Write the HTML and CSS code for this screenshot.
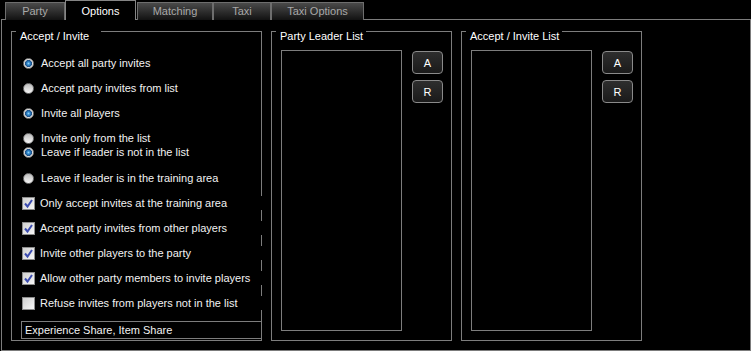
FILE: index.html
```html
<!DOCTYPE html>
<html lang="en">
<head>
  <meta charset="UTF-8">
  <title>Party Options</title>
  <link rel="stylesheet" href="styles.css">
</head>
<body>
  <div class="tabs">
    <div class="tab tab-party">Party</div>
    <div class="tab tab-options active">Options</div>
    <div class="tab tab-matching">Matching</div>
    <div class="tab tab-taxi">Taxi</div>
    <div class="tab tab-taxi-options">Taxi Options</div>
  </div>

  <div class="panel">
    <!-- left: accept / invite options -->
    <div class="group group-invite">
      <div class="group-title wide">Accept / Invite</div>

      <div class="row"><span class="radio on"></span>Accept all party invites</div>
      <div class="row"><span class="radio"></span>Accept party invites from list</div>
      <div class="row"><span class="radio on"></span>Invite all players</div>
      <div class="row tight"><span class="radio"></span>Invite only from the list</div>
      <div class="row"><span class="radio on"></span>Leave if leader is not in the list</div>
      <div class="row loose"><span class="radio"></span>Leave if leader is in the training area</div>
      <div class="row check-row"><span class="check on"><svg viewBox="0 0 11 11" width="11" height="11"><path d="M2 5.5 L4.5 8.5 L9 2"/></svg></span>Only accept invites at the training area</div>
      <div class="row check-row"><span class="check on"><svg viewBox="0 0 11 11" width="11" height="11"><path d="M2 5.5 L4.5 8.5 L9 2"/></svg></span>Accept party invites from other players</div>
      <div class="row check-row"><span class="check on"><svg viewBox="0 0 11 11" width="11" height="11"><path d="M2 5.5 L4.5 8.5 L9 2"/></svg></span>Invite other players to the party</div>
      <div class="row check-row"><span class="check on"><svg viewBox="0 0 11 11" width="11" height="11"><path d="M2 5.5 L4.5 8.5 L9 2"/></svg></span>Allow other party members to invite players</div>
      <div class="row check-row"><span class="check"></span>Refuse invites from players not in the list</div>

      <div class="share-field">Experience Share, Item Share</div>
    </div>

    <!-- middle: party leader list -->
    <div class="group group-list">
      <div class="group-title">Party Leader List</div>
      <div class="listbox"></div>
      <div class="list-buttons">
        <button class="btn">A</button>
        <button class="btn">R</button>
      </div>
    </div>

    <!-- right: accept / invite list -->
    <div class="group group-list">
      <div class="group-title">Accept / Invite List</div>
      <div class="listbox"></div>
      <div class="list-buttons">
        <button class="btn">A</button>
        <button class="btn">R</button>
      </div>
    </div>
  </div>
</body>
</html>
```

FILE: styles.css
```css
* {
  box-sizing: border-box;
}
body {
  margin: 0;
  background: #000;
  color: #f2f2f2;
  font-family: "Liberation Sans", Arial, sans-serif;
  font-size: 11px;
  width: 751px;
  height: 351px;
  overflow: hidden;
}

/* tabs */
.tabs {
  display: flex;
  align-items: flex-end;
  height: 20px;
  padding-left: 5px;
}
.tab {
  height: 18px;
  border: 1px solid #6e6e6e;
  border-bottom: none;
  background: linear-gradient(#4a4a4a, #121212);
  color: #a9a9a9;
  text-align: center;
  line-height: 16px;
}
.tab.active {
  position: relative;
  z-index: 1;
  height: 20px;
  background: #000;
  color: #fff;
  border-color: #858585;
  line-height: 20px;
}
.tab-party { width: 60px; }
.tab-options { width: 71px; }
.tab-matching { width: 76px; margin-left: 1px; }
.tab-taxi { width: 58px; }
.tab-taxi-options { width: 93px; }

/* main panel */
.panel {
  display: flex;
  gap: 9px;
  margin-top: -1px;
  margin-left: 1px;
  width: 750px;
  height: 332px;
  border: 1px solid #7c7c7c;
  padding: 11px 9px 9px 9px;
}

.group {
  position: relative;
  height: 310px;
  border: 1px solid #7d7d7d;
}
.group-title {
  position: absolute;
  top: -3px;
  left: 4px;
  padding: 0 3px 0 4px;
  background: #000;
  color: #fff;
  line-height: 14px;
}
.group-title.wide {
  padding-right: 12px;
}

/* accept / invite options */
.group-invite {
  width: 251px;
  display: flex;
  flex-direction: column;
  gap: 11px;
  padding-top: 24px;
}
.row {
  display: flex;
  align-items: center;
  height: 14px;
  margin-left: 9px;
  padding-left: 1px;
  white-space: nowrap;
}
.row.tight {
  margin-bottom: -11px;
}
.row.loose {
  margin-top: 1px;
}
.check-row {
  position: relative;
  width: 246px;
  background: #000;
}
.radio {
  width: 11px;
  height: 11px;
  margin: 0 7px 0 1px;
  border-radius: 50%;
  border: 1px solid #7b7b7b;
  background: linear-gradient(#bdbdbd, #f6f6f6);
  flex: none;
}
.radio.on {
  background: radial-gradient(circle, #8fd0f5 0, #2c86cc 1.6px, #1b4e86 3.2px, #d9d9d9 3.8px, #f4f4f4 5px);
}
.check {
  display: flex;
  align-items: center;
  justify-content: center;
  width: 13px;
  height: 13px;
  margin-right: 5px;
  border: 1px solid #8c8c8c;
  background: linear-gradient(135deg, #cfcfcf, #f7f7f7);
  flex: none;
}
.check svg path {
  fill: none;
  stroke: #3c4cb0;
  stroke-width: 2;
}
.share-field {
  position: relative;
  width: 241px;
  height: 18px;
  margin-left: 9px;
  border: 1px solid #7d7d7d;
  background: #000;
  padding-left: 3px;
  line-height: 16px;
}

/* list groups */
.group-list {
  width: 181px;
  display: flex;
  align-items: flex-start;
  padding: 18px 0 0 9px;
}
.listbox {
  width: 121px;
  height: 281px;
  border: 1px solid #7d7d7d;
}
.list-buttons {
  display: flex;
  flex-direction: column;
  gap: 6px;
  margin: 1px 0 0 10px;
}
.btn {
  width: 31px;
  height: 23px;
  padding: 0;
  border: 1px solid #8a8a8a;
  border-radius: 4px;
  background: linear-gradient(#2e2e2e, #1a1a1a);
  color: #fff;
  font-family: "Liberation Sans", Arial, sans-serif;
  font-size: 11px;
}
```
